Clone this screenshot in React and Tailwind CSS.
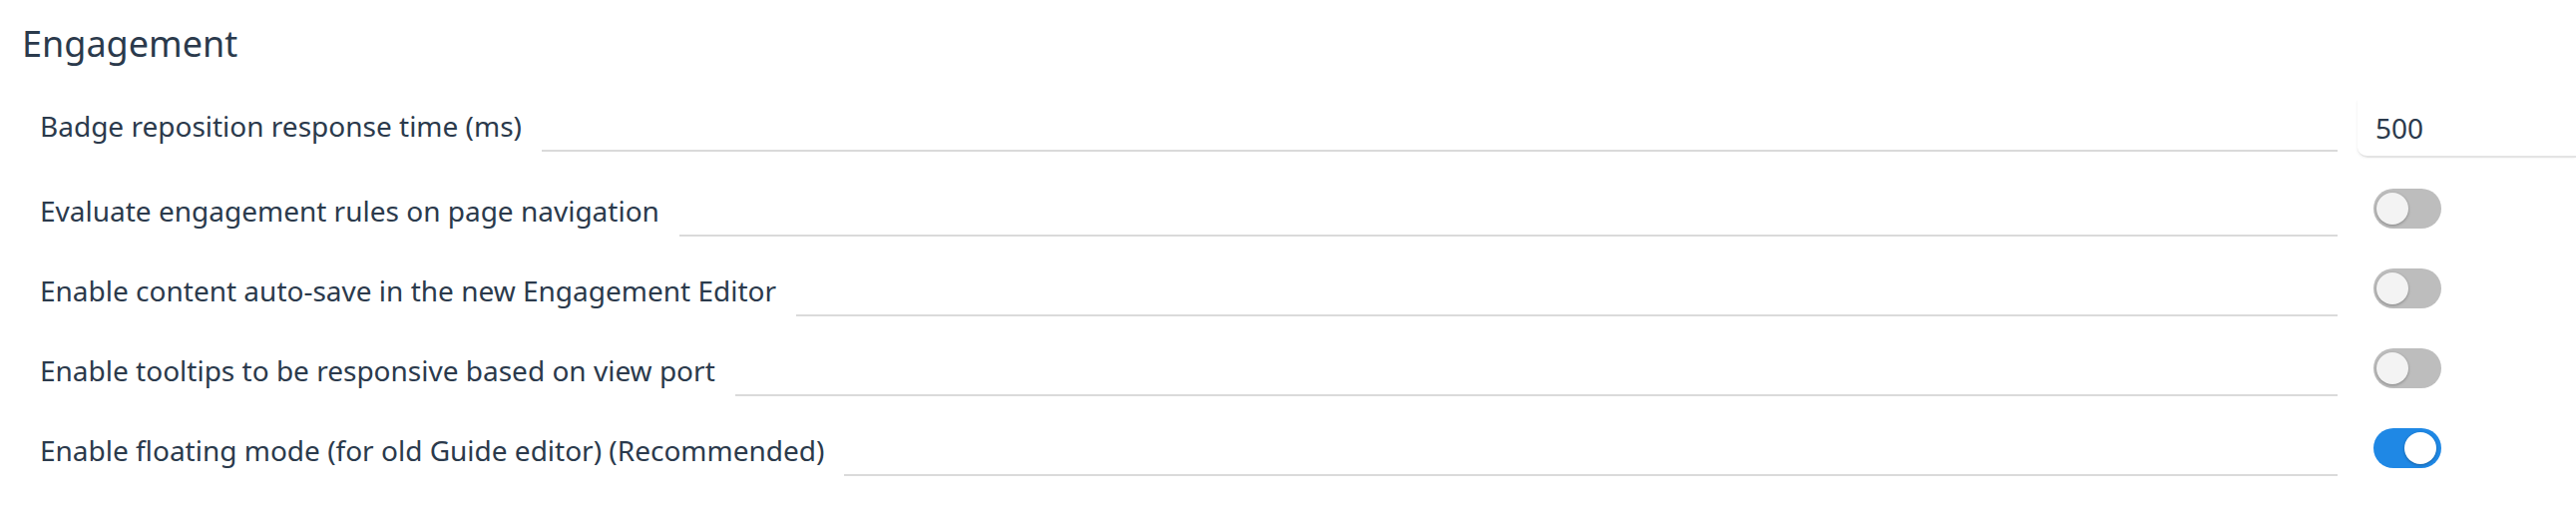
import React from 'react';

const rows = [
  { label: 'Evaluate engagement rules on page navigation', on: false },
  { label: 'Enable content auto-save in the new Engagement Editor', on: false },
  { label: 'Enable tooltips to be responsive based on view port', on: false },
  { label: 'Enable floating mode (for old Guide editor) (Recommended)', on: true },
];

const Toggle = ({ on }) => (
  <div
    className={`relative mt-[4px] h-[40px] w-[68px] rounded-full ${on ? 'bg-[#1f88e5]' : 'bg-[#bdbdbd]'}`}
  >
    <div
      className={`absolute top-[4px] h-[32px] w-[32px] rounded-full shadow-[0_1px_3px_rgba(0,0,0,0.3)] ${
        on ? 'right-[5px] bg-white' : 'left-[3px] bg-[#f3f3f3]'
      }`}
    />
  </div>
);

const Label = ({ children }) => (
  <div className="flex flex-1 items-end">
    <span className="whitespace-nowrap text-[28px] leading-[52px] text-[#2b3a4c]">{children}</span>
    <div className="ml-[20px] h-[2px] flex-1 bg-[#dadada]" />
  </div>
);

export default function App() {
  return (
    <div className="w-[2582px] h-[518px] bg-white font-['Noto_Sans',sans-serif]">
      <h2 className="pl-[22px] pt-[17px] text-[36px] leading-[54px] text-[#2b3a4c]">Engagement</h2>

      <div className="mt-[29px] flex flex-col gap-[28px] pl-[40px]">
        {/* number setting */}
        <div className="flex h-[57px] items-start">
          <Label>Badge reposition response time (ms)</Label>
          <div className="ml-[20px] w-[219px]">
            <div className="h-[58px] rounded-bl-[10px] border-b-2 border-[#e4e4e4] pl-[18px] pt-[2px] text-[28px] leading-[52px] text-[#2b3a4c] shadow-[-1px_1px_2px_rgba(0,0,0,0.04)]">
              500
            </div>
          </div>
        </div>

        {rows.map((r) => (
          <div key={r.label} className="flex h-[52px] items-start">
            <Label>{r.label}</Label>
            <div className="ml-[20px] w-[219px] pl-[16px]">
              <Toggle on={r.on} />
            </div>
          </div>
        ))}
      </div>
    </div>
  );
}
